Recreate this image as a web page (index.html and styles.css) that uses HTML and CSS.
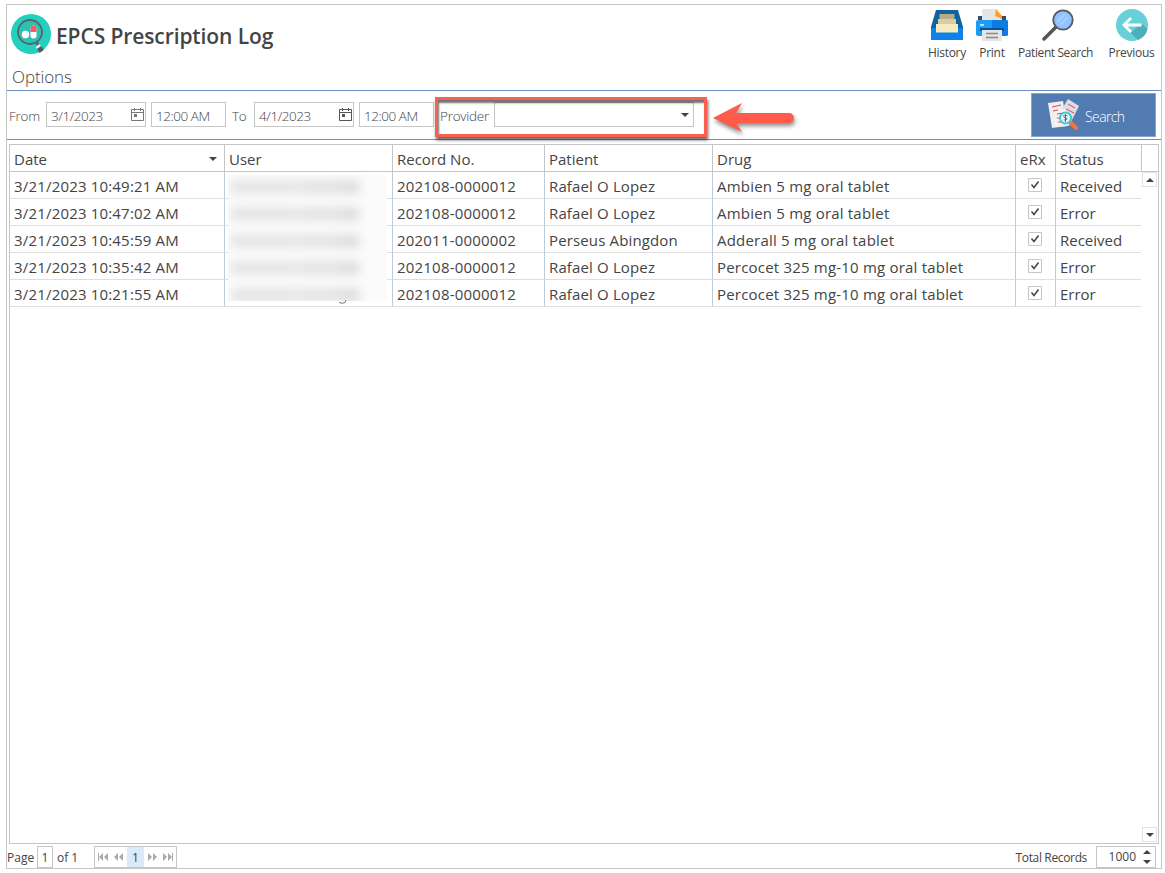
FILE: index.html
```html
<!DOCTYPE html>
<html lang="en">

<head>
    <meta charset="UTF-8">
    <meta name="viewport" content="width=device-width, initial-scale=1.0">
    <title>EPCS Prescription Log</title>
    <link rel="stylesheet" href="styles.css">
</head>

<body>
    <div class="window">
        <header class="header">
            <svg class="logo" width="40" height="40" viewBox="0 0 40 40">
                <circle cx="20" cy="20" r="20" fill="#23cfbf" />
                <circle cx="19" cy="18" r="12" fill="#2cc1b4" stroke="#5a6568" stroke-width="1.8" />
                <path d="M25.5 28.5l2 3" stroke="#5a6568" stroke-width="3" />
                <path d="M26.5 31.5l2 2.5" stroke="#e9eeee" stroke-width="5" />
                <path d="M28 33.5l2.700 4" stroke="#55595c" stroke-width="5" />
                <circle cx="14.5" cy="20.5" r="3.7" fill="#fff" />
                <rect x="19.5" y="11.5" width="6" height="13" rx="3" fill="#fff" />
                <path d="M19.5 18v-3.5a3 3 0 0 1 6 0V18z" fill="#f55b62" />
            </svg>
            <h1 class="title">EPCS Prescription Log</h1>
            <nav class="tools">
                <div class="tool history">
                    <svg width="32" height="32" viewBox="0 0 32 32">
                        <path d="M5 1h22l5 17v13H0V18z" fill="#11639f" />
                        <path d="M8.5 5h15v9h-15z" fill="#b8ad8b" />
                        <path d="M7 10h18v9H7z" fill="#d8cca2" />
                        <path d="M5 15h22v9H5z" fill="#f4ebc2" />
                        <path d="M0 19h5v4.5h22V19h5v11q0 1-1 1H1q-1 0-1-1z" fill="#0d83ea" />
                    </svg>
                    <span>History</span>
                </div>
                <div class="tool print">
                    <svg width="32" height="32" viewBox="0 0 32 32">
                        <path d="M2 7h28v5H2z" fill="#31506a" />
                        <path d="M6 0h14l6 7v5H6z" fill="#e5e5e5" />
                        <path d="M20 0l6 7v3l-7-3z" fill="#ff9f22" />
                        <rect y="11" width="32" height="16" rx="2" fill="#1e9cf5" />
                        <path d="M16 11h14q2 0 2 2v12q0 2-2 2H16z" fill="#0d7ce0" />
                        <path d="M4 19h24v3H4z" fill="#07549b" />
                        <path d="M6 21h20v11H6z" fill="#e5e5e5" />
                        <path d="M10 24.5h12M10 28.5h12" stroke="#8b8b90" stroke-width="1.4" />
                        <path d="M4 16h4" stroke="#a3ecff" stroke-width="2" />
                    </svg>
                    <span>Print</span>
                </div>
                <div class="tool patient">
                    <svg width="32" height="32" viewBox="0 0 32 32">
                        <path d="M14 18L2 30" stroke="#555" stroke-width="3.5" stroke-linecap="round" />
                        <circle cx="21" cy="11" r="9.7" fill="#91c2ff" stroke="#555a60" stroke-width="1.8" />
                        <path d="M15 13l8-8M18 16l8-8" stroke="#a5d0ff" stroke-width="2" />
                    </svg>
                    <span>Patient Search</span>
                </div>
                <div class="tool previous">
                    <svg width="32" height="32" viewBox="0 0 32 32">
                        <circle cx="16" cy="16" r="16" fill="#67d0d8" />
                        <path d="M15 24l7 7a16 16 0 0 0 9.5-11L25 14z" fill="#4caeba" />
                        <path d="M25.5 16H9M15 9l-7 7 7 7" fill="none" stroke="#fff" stroke-width="2.8" />
                    </svg>
                    <span>Previous</span>
                </div>
            </nav>
        </header>
        <h2 class="options">Options</h2>
        <form class="filters">
            <span class="label from">From</span>
            <div class="field date">
                <span>3/1/2023</span>
                <svg width="13" height="13" viewBox="0 0 13 13"><path d="M.5 1.5h12v11H.5zM0 4.5h13M3.5 0v3M9.5 0v3" fill="none" stroke="#777" /><path d="M3 6h3v3H3z" fill="#777" /></svg>
            </div>
            <div class="field time"><span>12:00 AM</span></div>
            <span class="label to">To</span>
            <div class="field date">
                <span>4/1/2023</span>
                <svg width="13" height="13" viewBox="0 0 13 13"><path d="M.5 1.5h12v11H.5zM0 4.5h13M3.5 0v3M9.5 0v3" fill="none" stroke="#555" /><path d="M3 6h3v3H3z" fill="#555" /></svg>
            </div>
            <div class="field time"><span>12:00 AM</span></div>
            <div class="provider">
                <span class="label">Provider</span>
                <div class="field combo"><i class="down"></i></div>
                <div class="highlight"></div>
            </div>
            <svg class="arrow" width="86" height="40" viewBox="0 0 86 40">
                <path d="M0 20L29 5l-6 10h53a5 5 0 0 1 0 10H23l6 9z" fill="#ff5a4a" />
            </svg>
            <button type="button" class="search">
                <svg width="32" height="32" viewBox="0 0 32 32">
                    <path d="M0 4l15-2 4 25-15 2z" fill="#f0eeee" />
                    <path d="M20 0l11 7-10 20-13-7z" fill="#dcdee2" />
                    <path d="M6 11l12-1 2 17-13 1z" fill="#f5f3f2" />
                    <path d="M4 8l9-2M5 12l5-1M20 5l7 4M18 10l8 4M9 15l6-1M9 19h4M10 23h4" stroke="#dd4654" />
                    <path d="M23 24l5 5" stroke="#ed7837" stroke-width="4" stroke-linecap="round" />
                    <circle cx="17.5" cy="19" r="5.5" fill="#eafafa" stroke="#40c7d1" stroke-width="2" />
                    <path d="M19.5 17q-4-2-4 0t3 2q2 2-3 2M17.5 15v8" fill="none" stroke="#31596a" stroke-width=".8" />
                </svg>
                <span>Search</span>
            </button>
        </form>

        <main class="grid">
            <div class="row head">
                <div class="cell"><span>Date</span><i class="down"></i></div>
                <div class="cell">User</div>
                <div class="cell">Record No.</div>
                <div class="cell">Patient</div>
                <div class="cell">Drug</div>
                <div class="cell">eRx</div>
                <div class="cell">Status</div>
                <div class="cell"></div>
            </div>
            <div class="body">
                <div class="rows" id="rows"></div>
                <div class="scroll">
                    <span class="scroll-btn"><i class="up"></i></span>
                    <span class="scroll-btn"><i class="down"></i></span>
                </div>
                <div class="redacted"><b></b><b></b><b></b><b></b><b></b></div>
                <svg class="tail" width="9" height="4" viewBox="0 0 9 4"><path d="M1 2.5q3 1.5 6 0L8 0" fill="none" stroke="#777" /></svg>
            </div>
        </main>

        <footer class="footer">
            <span class="page-label">Page</span>
            <span class="page-box">1</span>
            <span class="page-of">of 1</span>
            <div class="pager">
                <svg width="12" height="10" viewBox="0 0 12 10"><path d="M1 1h1v8H1zM6 1v8L2 5zM11 1v8L7 5z" fill="#aaa" /></svg>
                <svg width="12" height="10" viewBox="0 0 12 10"><path d="M6 1v8L2 5zM11 1v8L7 5z" fill="#aaa" /></svg>
                <span class="current">1</span>
                <svg width="12" height="10" viewBox="0 0 12 10"><path d="M1 1v8l4-4zM6 1v8l4-4z" fill="#aaa" /></svg>
                <svg width="12" height="10" viewBox="0 0 12 10"><path d="M1 1v8l4-4zM6 1v8l4-4zM10 1h1v8h-1z" fill="#aaa" /></svg>
            </div>
            <span class="total">Total Records</span>
            <div class="spinner"><span>1000</span><div class="spin"><i class="up"></i><i class="down"></i></div></div>
        </footer>
    </div>

    <script src="script.js"></script>
</body>

</html>
```

FILE: styles.css
```css
* {
    box-sizing: border-box;
}

body {
    margin: 0;
    background: #fff;
    color: #444;
    font-family: "Open Sans", "Noto Sans", sans-serif;
    font-size: 12px;
}

svg {
    display: block;
    flex: none;
}

.window {
    width: 1156px;
    height: 865px;
    margin: 4px 0 0 6px;
    border: 1px solid #c6c6c6;
}

.header {
    display: flex;
    height: 60px;
    padding-left: 4px;
}

.logo {
    margin-top: 9px;
}

.title {
    margin: 14px 0 0 5px;
    font-size: 21px;
    line-height: 34px;
    font-weight: 600;
    letter-spacing: -.1px;
    white-space: nowrap;
}

.tools {
    display: flex;
    margin-left: auto;
}

.tool {
    display: flex;
    flex-direction: column;
    align-items: center;
    padding-top: 4px;
    line-height: 16px;
    white-space: nowrap;
    letter-spacing: -.3px;
}

.tool span {
    margin-top: 4px;
}

.history {
    width: 46px;
}

.print {
    width: 44px;
}

.patient {
    width: 83px;
    letter-spacing: -.4px;
}

.patient svg {
    margin-left: 4px;
}

.previous {
    width: 69px;
    margin-right: -5px;
}

.options {
    height: 26px;
    margin: 0;
    padding-left: 5px;
    border-bottom: 1px solid #6c8ebf;
    font-size: 17px;
    line-height: 23px;
    font-weight: 300;
    letter-spacing: -.1px;
}

.filters {
    display: flex;
    align-items: center;
    height: 49px;
    padding-bottom: 1px;
    border-bottom: 1px solid #6c8ebf;
    font-size: 13.5px;
    font-weight: 300;
}

.label {
    padding-top: 2px;
    white-space: nowrap;
    letter-spacing: -.25px;
}

.from {
    width: 39px;
    padding-left: 2px;
}

.to {
    width: 28px;
    padding-left: 6px;
}

.field {
    display: flex;
    align-items: center;
    height: 25px;
    border: 1px solid #c6c6c6;
    padding: 0 4px;
    white-space: nowrap;
    letter-spacing: -.45px;
}

.field span {
    padding-top: 3px;
}

.date {
    justify-content: space-between;
    width: 100px;
    padding-right: 1px;
}

.time {
    width: 75px;
    margin-left: 5px;
}

.provider {
    display: flex;
    align-items: center;
    position: relative;
    margin-left: 6px;
}

.provider .label {
    width: 54px;
}

.combo {
    width: 200px;
    justify-content: flex-end;
}

.highlight {
    position: absolute;
    left: -5px;
    top: -5px;
    width: 272px;
    height: 40px;
    border: 3px solid #fa5f50;
    box-shadow: 1px 3px 3px rgba(0, 0, 0, .6), inset 1px 3px 2px rgba(0, 0, 0, .55);
}

.arrow {
    margin: 7px 0 0 19px;
    filter: drop-shadow(1px 3px 2px rgba(0, 0, 0, .45));
}

.search {
    display: flex;
    align-items: center;
    width: 125px;
    height: 44px;
    margin: 1px 5px 0 auto;
    padding: 0 0 0 16px;
    border: 1px solid #86a5d3;
    background: #527bb1;
    color: #fff;
    font: 300 14px "Open Sans", sans-serif;
    letter-spacing: -.6px;
}

.search span {
    margin-left: 5px;
    padding-top: 2px;
}

.up,
.down {
    width: 0;
    height: 0;
    border: 4px solid transparent;
    border-bottom-width: 0;
    border-top-color: #444;
}

.up {
    border-width: 0 4px 4px;
    border-bottom-color: #444;
}

.grid {
    display: flex;
    flex-direction: column;
    width: 1150px;
    height: 700px;
    margin: 4px 0 0 2px;
    border: 1px solid #c6c6c6;
    font-size: 15px;
}

.row {
    display: grid;
    grid-template-columns: 215px 168px 152px 168px 303px 40px 85px;
    height: 27px;
}

.head {
    grid-template-columns: 215px 168px 152px 168px 303px 40px 86px 16px;
    border-bottom: 1px solid #c6c6c6;
}

.cell {
    display: flex;
    align-items: center;
    padding: 1px 4px 0;
    border-right: 1px solid #bccbdc;
    border-bottom: 1px solid #dedede;
    line-height: 22px;
    white-space: nowrap;
}

.head .cell {
    justify-content: space-between;
    border-color: #c6c6c6;
    border-bottom: 0;
}

.head .cell:last-child,
.rows .cell:last-child {
    border-right: 0;
}

.head .down {
    margin-right: 3px;
}

.when {
    letter-spacing: .18px;
}

.record,
.drug {
    letter-spacing: .2px;
}

.patient-name {
    letter-spacing: .14px;
}

.check {
    justify-content: center;
    padding: 0 2px 0 0;
}

.body {
    display: flex;
    position: relative;
    flex: 1;
}

.rows {
    width: 1132px;
}

.scroll {
    display: flex;
    flex-direction: column;
    justify-content: space-between;
    width: 15px;
    padding-bottom: 1px;
}

.scroll-btn {
    display: flex;
    align-items: center;
    justify-content: center;
    width: 15px;
    height: 15px;
    border: 1px solid #e2e2e2;
}

.redacted {
    display: flex;
    flex-direction: column;
    gap: 13px;
    position: absolute;
    left: 218px;
    top: 3px;
    width: 159px;
    height: 126px;
    padding: 5px 3px 0;
    overflow: hidden;
    background: #fbfbfb;
}

.redacted b {
    flex: none;
    width: 128px;
    height: 14px;
    background: linear-gradient(90deg, #e5e5e5 0 48%, #ececec 52%, #e4e4e4 56% 78%, #dcdcdc);
    filter: blur(5px);
}

.tail {
    position: absolute;
    left: 328px;
    top: 128px;
}

.footer {
    display: flex;
    align-items: flex-end;
    height: 24px;
    line-height: 22px;
}

.page-label,
.page-of,
.total {
    height: 21px;
}

.page-label {
    width: 30px;
}

.page-box {
    width: 16px;
    height: 22px;
    border: 1px solid #c6c6c6;
    text-align: center;
}

.page-of {
    width: 41px;
    padding-left: 4px;
}

.pager {
    display: flex;
    align-items: center;
    justify-content: space-between;
    width: 83px;
    height: 22px;
    padding: 0 2px;
    border: 1px solid #c6c6c6;
}

.current {
    width: 17px;
    height: 20px;
    background: #dbe9f8;
    text-align: center;
}

.total {
    margin-left: auto;
    letter-spacing: -.35px;
}

.spinner {
    display: flex;
    align-items: center;
    justify-content: flex-end;
    width: 60px;
    height: 22px;
    margin: 0 5px 0 9px;
    padding-right: 4px;
    border: 1px solid #c6c6c6;
}

.spin {
    display: flex;
    flex-direction: column;
    gap: 6px;
    margin-left: 7px;
}
```

FILE: script.js
```javascript
// prescription rows: date, record, patient, drug, status
var data = [
    ['3/21/2023 10:49:21 AM', '202108-0000012', 'Rafael O Lopez', 'Ambien 5 mg oral tablet', 'Received'],
    ['3/21/2023 10:47:02 AM', '202108-0000012', 'Rafael O Lopez', 'Ambien 5 mg oral tablet', 'Error'],
    ['3/21/2023 10:45:59 AM', '202011-0000002', 'Perseus Abingdon', 'Adderall 5 mg oral tablet', 'Received'],
    ['3/21/2023 10:35:42 AM', '202108-0000012', 'Rafael O Lopez', 'Percocet 325 mg-10 mg oral tablet', 'Error'],
    ['3/21/2023 10:21:55 AM', '202108-0000012', 'Rafael O Lopez', 'Percocet 325 mg-10 mg oral tablet', 'Error']
];
var check = '<svg width="14" height="14" viewBox="0 0 14 14"><path d="M.5.5h13v13H.5z" fill="#fff" stroke="#c6c6c6"/><path d="M3.5 6.5L6 9.5l4.5-6" fill="none" stroke="#444" stroke-width="1.5"/></svg>';
var html = '';
data.forEach(function (r) {
    html += '<div class="row"><div class="cell when">' + r[0] + '</div><div class="cell"></div>' +
        '<div class="cell record">' + r[1] + '</div><div class="cell patient-name">' + r[2] + '</div>' +
        '<div class="cell drug">' + r[3] + '</div><div class="cell check">' + check + '</div>' +
        '<div class="cell">' + r[4] + '</div></div>';
});
document.getElementById('rows').innerHTML = html;
```
